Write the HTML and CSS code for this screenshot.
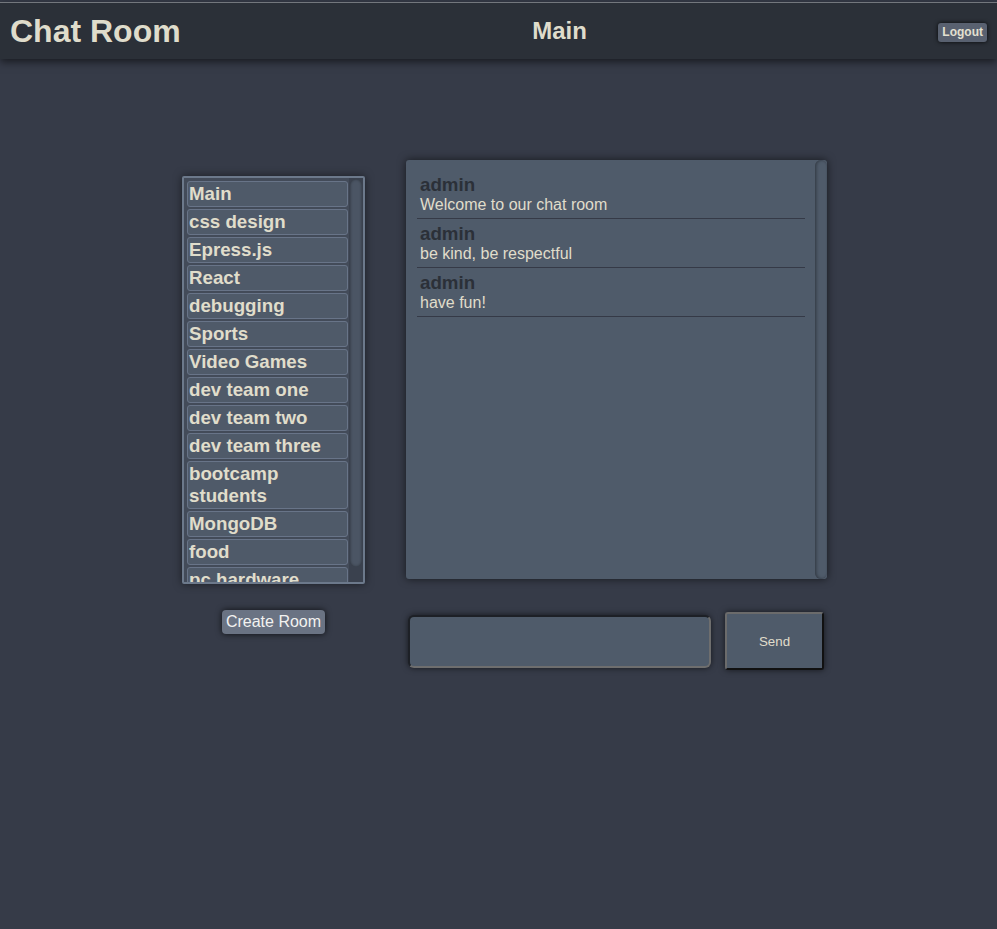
FILE: index.html
```html
<!DOCTYPE html>
<html>
<head>
<meta charset="utf-8">
<title>Chat Room</title>
<link rel="stylesheet" href="styles.css">
</head>
<body>
<header class="topbar">
  <h1 class="brand">Chat Room</h1>
  <h2 class="room-title">Main</h2>
  <button class="logout">Logout</button>
</header>
<main class="layout">
  <section class="rooms-col">
    <div class="room-list">
      <div class="room-items">
        <h3 class="room">Main</h3>
        <h3 class="room">css design</h3>
        <h3 class="room">Epress.js</h3>
        <h3 class="room">React</h3>
        <h3 class="room">debugging</h3>
        <h3 class="room">Sports</h3>
        <h3 class="room">Video Games</h3>
        <h3 class="room">dev team one</h3>
        <h3 class="room">dev team two</h3>
        <h3 class="room">dev team three</h3>
        <h3 class="room">bootcamp students</h3>
        <h3 class="room">MongoDB</h3>
        <h3 class="room">food</h3>
        <h3 class="room">pc hardware</h3>
      </div>
      <div class="room-track"><div class="room-thumb"></div></div>
    </div>
    <button class="create-room">Create Room</button>
  </section>
  <section class="chat-col">
    <div class="chat-panel">
      <div class="messages">
        <div class="message">
          <div class="author">admin</div>
          <div class="text">Welcome to our chat room</div>
        </div>
        <div class="message">
          <div class="author">admin</div>
          <div class="text">be kind, be respectful</div>
        </div>
        <div class="message">
          <div class="author">admin</div>
          <div class="text">have fun!</div>
        </div>
      </div>
      <div class="fake-scroll"></div>
    </div>
    <div class="composer">
      <textarea class="msg-input"></textarea>
      <button class="send">Send</button>
    </div>
  </section>
</main>
</body>
</html>
```
FILE: styles.css
```css
html, body {
  margin: 0;
  padding: 0;
}
body {
  background: #363b48;
  font-family: "Liberation Sans", Arial, sans-serif;
  padding-top: 2px;
  min-height: 927px;
}
.topbar {
  display: flex;
  justify-content: space-between;
  align-items: center;
  height: 56px;
  padding: 0 10px;
  background: #2b3038;
  border-top: 1px solid #73777d;
  box-shadow: 0 3px 8px rgba(0, 0, 0, 0.55);
}
.brand {
  margin: 0;
  font-size: 32px;
  font-weight: bold;
  color: #dfdccb;
}
.room-title {
  margin: 0;
  font-size: 24px;
  font-weight: bold;
  color: #dfdccb;
}
.logout {
  margin-top: 2px;
  font-family: "Liberation Sans", Arial, sans-serif;
  font-size: 12px;
  font-weight: bold;
  color: #e3e0d0;
  background: #596170;
  border: none;
  border-radius: 3px;
  padding: 2px 4px;
  line-height: 15px;
  box-shadow: 0 0 4px rgba(0, 0, 0, 0.85);
}
.layout {
  display: flex;
  justify-content: center;
  align-items: flex-start;
  gap: 41px;
  margin-top: 101px;
  padding-left: 12px;
}
.rooms-col {
  width: 183px;
  margin-top: 16px;
  display: flex;
  flex-direction: column;
  align-items: center;
}
.room-list {
  display: flex;
  width: 183px;
  height: 408px;
  box-sizing: border-box;
  border: 2px solid #6c798b;
  border-radius: 2px;
  background: #434b59;
  box-shadow: 0 0 8px rgba(0, 0, 0, 0.5);
}
.room-items {
  flex: 1;
  overflow: hidden;
  padding: 3px 1px 0 3px;
}
.room-track {
  width: 14px;
  background: #3a414e;
  padding: 1px;
  box-sizing: border-box;
}
.room-thumb {
  height: 388px;
  border-radius: 6px;
  background: #4b5564;
  box-shadow: inset 0 0 3px rgba(0, 0, 0, 0.45);
}
.room {
  margin: 0 0 2px 0;
  padding: 1px;
  border: 1px solid #687488;
  border-radius: 3px;
  background: #4f5a69;
  font-size: 18.72px;
  font-weight: bold;
  line-height: 22px;
  color: #e0ddcb;
}
.create-room {
  margin-top: 26px;
  font-family: "Liberation Sans", Arial, sans-serif;
  font-size: 16px;
  color: #f2f2f0;
  background: #6a7383;
  border: none;
  border-radius: 4px;
  padding: 3px 3.5px;
  box-shadow: 0 0 6px rgba(0, 0, 0, 0.75);
}
.chat-col {
  width: 421px;
  display: flex;
  flex-direction: column;
}
.chat-panel {
  display: flex;
  height: 419px;
  background: #4f5b6a;
  border-radius: 3px;
  box-shadow: 0 0 8px rgba(0, 0, 0, 0.6);
}
.messages {
  flex: 1;
  padding: 10px 10px 0 11px;
}
.message {
  padding: 5px 3px 4px;
  border-bottom: 1px solid #353a47;
}
.author {
  font-size: 18.72px;
  font-weight: bold;
  line-height: 20px;
  color: #2b3038;
}
.text {
  font-size: 16px;
  line-height: 19px;
  color: #e0ddcb;
}
.fake-scroll {
  width: 12px;
  border-radius: 6px;
  background: #4f5b6a;
  box-shadow: inset 2px 0 3px rgba(0, 0, 0, 0.25), inset 0 0 2px rgba(0, 0, 0, 0.2);
}
.composer {
  display: flex;
  align-items: center;
  gap: 14px;
  margin-top: 33px;
  padding-left: 2px;
}
.msg-input {
  width: 303px;
  height: 53px;
  box-sizing: border-box;
  margin: 0;
  resize: none;
  background: #4f5b6a;
  border-style: solid;
  border-width: 2px;
  border-color: #1d2026 #6e6e6e #6e6e6e #1d2026;
  border-radius: 6px;
  box-shadow: 0 0 6px rgba(0, 0, 0, 0.6);
}
.send {
  width: 99px;
  height: 58px;
  box-sizing: border-box;
  background: #4f5b6a;
  color: #e0ddcb;
  font-family: "Liberation Sans", Arial, sans-serif;
  font-size: 13.33px;
  border-style: solid;
  border-width: 2px;
  border-color: #6b6b6b #111 #111 #6b6b6b;
  border-radius: 3px;
  box-shadow: 0 0 6px rgba(0, 0, 0, 0.6);
}
```
